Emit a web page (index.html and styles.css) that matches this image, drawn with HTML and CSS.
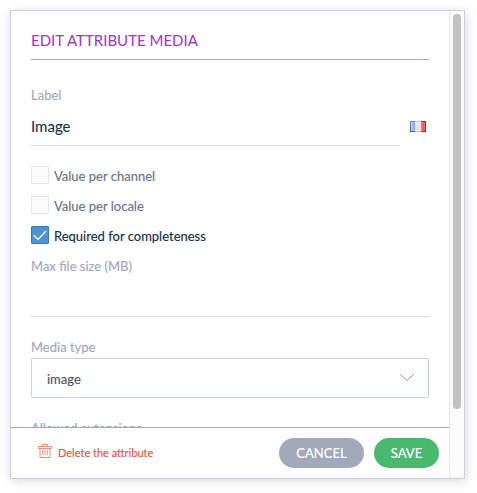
FILE: index.html
```html
<!DOCTYPE html>
<html lang="en">
<head>
<meta charset="utf-8">
<title>Edit attribute media</title>
<link rel="stylesheet" href="styles.css">
</head>
<body>
<section class="panel">
  <div class="main">
    <form class="content">
      <h1 class="title">Edit attribute media</h1>
      <div class="field">
        <span class="label">Label</span>
        <div class="localized">
          <div class="input">Image</div>
          <svg class="flag" width="16" height="11" viewBox="0 0 16 11">
            <defs>
              <linearGradient id="blue" x2="1" y2="0"><stop stop-color="#b5c6ed"/><stop offset="1" stop-color="#8ba3df"/></linearGradient>
              <linearGradient id="edge" x2="0" y2="1"><stop stop-color="#7089d6"/><stop offset="1" stop-color="#3556b8"/></linearGradient>
              <linearGradient id="red" x2="1" y2="0"><stop stop-color="#ff7a6b"/><stop offset="1" stop-color="#ff3a24"/></linearGradient>
            </defs>
            <path fill="url(#edge)" d="M0 0h5v11H0z"/>
            <path fill="#c4c4c4" d="M5 0h6v11H5z"/>
            <path fill="#e60a0a" d="M11 0h5v11h-5z"/>
            <path fill="url(#blue)" d="M1 1h4v9H1z"/>
            <path fill="#e6e6e6" d="M5 1h6v9H5z"/>
            <path fill="url(#red)" d="M11 1h4v9h-4z"/>
            <path fill="none" stroke="#fff" stroke-opacity=".25" d="M1.500 1.500h13v8h-13z"/>
          </svg>
        </div>
      </div>
      <div class="checks">
        <div class="check"><span class="box"></span><span>Value per channel</span></div>
        <div class="check"><span class="box"></span><span>Value per locale</span></div>
        <div class="check on"><span class="box"><svg width="16" height="16" viewBox="0 0 16 16"><path d="M1.700 8.300l4.300 4.200 8-8.500"/></svg></span><span>Required for completeness</span></div>
      </div>
      <div class="field size">
        <span class="label">Max file size (MB)</span>
        <div class="input"></div>
      </div>
      <div class="field media">
        <span class="label">Media type</span>
        <div class="select"><span>image</span><svg width="16" height="9" viewBox="0 0 16 9"><path d="M1 1l7 6.500L15 1"/></svg></div>
      </div>
      <div class="field extensions"><span class="label">Allowed extensions</span></div>
    </form>
    <footer class="footer">
      <div class="delete">
        <svg width="14" height="15" viewBox="0 0 14 15"><path d="M.5 2.500h13v2H.5zM4.500 2.500v-2h5v2M2 4.500v9h10v-9M4.700 6v5M7 6v5M9.300 6v5"/></svg>
        <span>Delete the attribute</span>
      </div>
      <span class="button cancel">Cancel</span>
      <span class="button save">Save</span>
    </footer>
  </div>
  <div class="track"><div class="thumb"></div></div>
</section>
</body>
</html>
```
FILE: styles.css
```css
* { box-sizing: border-box; }
body { margin: 0; padding: 10px; background: #fff; font: 13px/16px Lato, sans-serif; color: #11324d; -webkit-text-stroke: .16px currentColor; }
.panel { display: flex; width: 455px; height: 469px; border: 1px solid #ccccdc; background: #fff; box-shadow: 1px 2px 10px rgba(0, 0, 0, .15); }
.main { display: flex; flex-direction: column; width: 438px; }
.content { height: 416px; padding: 0 20px; overflow: hidden; }
.title { height: 49px; margin: 0 0 27px; padding-top: 19px; border-bottom: 1px solid #a1a9b7; font-size: 15px; line-height: 20px; font-weight: 400; text-transform: uppercase; color: #a336c2; -webkit-text-stroke-width: .06px; }
.label { display: block; color: #a1a9bb; }
.localized { display: flex; align-items: flex-start; justify-content: space-between; }
.input { height: 43px; border-bottom: 1px solid #d9d9e2; font-size: 15px; -webkit-text-stroke-width: .1px; }
.localized .input { width: 369px; line-height: 46px; }
.flag { margin: 18px 3px 0 0; }
.checks { display: flex; flex-direction: column; gap: 12px; padding-top: 20px; }
.check { display: flex; gap: 5px; height: 18px; line-height: 20px; color: #67768a; }
.box { width: 18px; height: 18px; border: 1px solid #e3e5ea; border-radius: 1px; background: #fafafb; }
.box svg { display: block; }
.on { color: #11324d; }
.on .box { border-color: #3b77b0; background: #4f93d2; }
.on path { fill: none; stroke: #fff; stroke-width: 1.2; }
.size { padding-top: 14px; }
.media { padding-top: 22px; }
.select { display: flex; align-items: center; justify-content: space-between; height: 40px; margin-top: 3px; padding: 2px 13px 0 15px; border: 1px solid #ccd0da; border-radius: 2px; color: #4a566b; }
.select svg { margin-top: -3px; }
.select path { fill: none; stroke: #8f99b0; }
.extensions { padding-top: 22px; }
.footer { display: flex; align-items: center; gap: 10px; height: 51px; padding: 0 10px 0 27px; border-top: 1px solid #a1a9b7; }
.delete { display: flex; align-items: center; gap: 6px; flex: 1; font-size: 11px; color: #e4583f; }
.delete svg { margin-top: -3px; }
.delete path { fill: none; stroke: #ec8c7b; }
.button { height: 30px; border-radius: 15px; color: #fff; line-height: 30px; text-align: center; text-transform: uppercase; }
.cancel { width: 85px; background: #a1a9bb; }
.save { width: 65px; background: #49b96d; }
.track { width: 15px; border-left: 1px solid #e8e8e8; background: #fafafa; padding: 3px 0 0 3px; }
.thumb { width: 8px; height: 395px; border-radius: 4px; background: #c1c1c1; }
```
